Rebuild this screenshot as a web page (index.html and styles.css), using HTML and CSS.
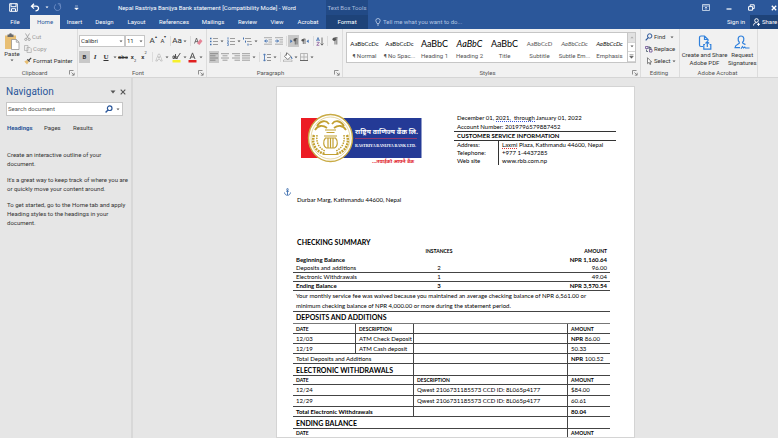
FILE: index.html
```html
<!DOCTYPE html>
<html lang="en">
<head>
<meta charset="utf-8">
<title>Nepal Rastriya Banijya Bank statement - Word</title>
<link rel="stylesheet" href="styles.css">
</head>
<body>
<svg class="defs" aria-hidden="true">
  <symbol id="caret" viewBox="0 0 4 3"><path d="M.5 .6h3L2 2.3z" fill="#555"/></symbol>
  <symbol id="launch" viewBox="0 0 6 6"><path d="M.5 4.5v-4h4M2.500 2.500l2.500 2.500M5.200 2.800v2.400h-2.400" fill="none" stroke="#777" stroke-width=".8"/></symbol>
</svg>

<header class="top">
  <div class="titlebar">
    <div class="quick">
      <button aria-label="Save"><svg width="9" height="9" viewBox="0 0 9 9"><path d="M.7.7h7.600v7.600H.7zM2 .7v3h5v-3M2.500 8.300v-2.600h4v2.600" fill="none" stroke="#fff"/></svg></button>
      <button aria-label="Undo"><svg width="10" height="9" viewBox="0 0 10 9"><path d="M4 .8 1.500 3.200 4 5.600M1.800 3.200h4.400c3.400 0 3 4.600-.7 4.600" fill="none" stroke="#fff" stroke-width="1.300"/></svg></button>
      <button aria-label="Undo list" class="light"><svg width="4" height="3"><path d="M.5.6h3L2 2.300z" fill="#fff"/></svg></button>
      <button aria-label="Repeat"><svg width="9" height="9" viewBox="0 0 9 9"><path d="M3 1.500a3.200 3.200 0 1 0 3.500.3M4.800.8h2.400v2.400" fill="none" stroke="#6c8cc4"/></svg></button>
      <button aria-label="Customize toolbar"><svg width="5" height="6"><path d="M1 1h3M.7 3h3.600L2.500 5z" fill="#fff" stroke="#fff" stroke-width=".5"/></svg></button>
    </div>
    <h1>Nepal Rastriya Banijya Bank statement [Compatibility Mode] - Word</h1>
    <span class="context">Text Box Tools</span>
    <div class="winctl">
      <button aria-label="Ribbon display options"><svg width="8" height="7" viewBox="0 0 8 7"><path d="M.5.5h7v6h-7zM.5 2h7M4 5.800V3M2.800 4.200 4 3l1.200 1.200" fill="none" stroke="#dbe4f3" stroke-width=".8"/></svg></button>
      <button aria-label="Minimize"><svg width="6" height="6"><path d="M.5 4h5" stroke="#fff" stroke-width="1.200"/></svg></button>
      <button aria-label="Restore"><svg width="7" height="7" viewBox="0 0 7 7"><path d="M.6 2.600h4v3.600h-4zM2.200 2.400V.8h4v3.800H4.800" fill="none" stroke="#fff" stroke-width="1"/></svg></button>
      <button aria-label="Close"><svg width="6" height="6"><path d="M.8.8l4.400 4.400M5.200.8.8 5.200" stroke="#fff" stroke-width="1.300"/></svg></button>
    </div>
  </div>
  <nav class="tabs">
    <a href="#">File</a><a href="#" class="on">Home</a><a href="#">Insert</a><a href="#">Design</a><a href="#">Layout</a><a href="#">References</a><a href="#">Mailings</a><a href="#">Review</a><a href="#">View</a><a href="#">Acrobat</a><a href="#" class="fmt">Format</a>
    <label class="tell"><svg width="6" height="8" viewBox="0 0 6 8"><path d="M2 5.500C2 4.500.8 4 .8 2.700a2.200 2.200 0 0 1 4.400 0C5.200 4 4 4.500 4 5.500zM2 7h2" fill="none" stroke="#c3d2ea" stroke-width=".8"/></svg><input type="text" placeholder="Tell me what you want to do..."></label>
    <a href="#" class="sign">Sign in</a>
    <a href="#" class="share"><svg width="7" height="8" viewBox="0 0 7 8"><circle cx="3.500" cy="2.500" r="1.800" fill="none" stroke="#fff"/><path d="M.6 7.500c0-2 1.200-2.800 2.900-2.800M4 6.300h3M5.500 4.800v3" fill="none" stroke="#fff"/></svg>Share</a>
  </nav>
</header>

<section class="ribbon">
  <div class="group clip">
    <div class="body">
      <button class="paste"><svg width="16" height="17" viewBox="0 0 16 17"><path d="M1 2.500h11V16H1z" fill="#e8bf74"/><path d="M3.500 1.500h1.700a1.300 1.300 0 0 1 2.600 0h1.700V4h-6z" fill="#6a6a6a"/><path d="M7.500 6.500h4.800l2.700 2.700v7.300H7.500z" fill="#fff" stroke="#8a8a8a" stroke-width=".7"/><path d="M12.300 6.500v2.700H15" fill="none" stroke="#8a8a8a" stroke-width=".7"/></svg>Paste<svg width="4" height="3"><use href="#caret"/></svg></button>
      <div class="cliplist">
        <button class="dim"><svg width="7" height="8" viewBox="0 0 7 8"><path d="M1.500.5l3 5M5.500.5l-3 5" stroke="#999" stroke-width=".8"/><circle cx="1.800" cy="6.400" r="1.100" fill="none" stroke="#999" stroke-width=".8"/><circle cx="5.200" cy="6.400" r="1.100" fill="none" stroke="#999" stroke-width=".8"/></svg>Cut</button>
        <button class="dim"><svg width="8" height="8" viewBox="0 0 8 8"><path d="M.5.5h3.500v5H.5zM3 2.500h3l1.300 1.300v3.700H3z" fill="#eee" stroke="#aaa" stroke-width=".7"/></svg>Copy</button>
        <button><svg width="8" height="8" viewBox="0 0 8 8"><path d="M.3 4.500 3 3l1.800 2L3 7.500z" fill="#e8bf74"/><path d="M3.300 2.300 5.600 4.700M4.600 3.500l2.600-2.600" stroke="#444" stroke-width="1.200"/></svg>Format Painter</button>
      </div>
    </div>
    <footer><span>Clipboard</span><svg width="6" height="6"><use href="#launch"/></svg></footer>
  </div>

  <div class="group font">
    <div class="body rows">
      <div class="row f1">
        <label class="combo"><select aria-label="Font"><option>Calibri</option></select><svg width="4" height="3"><use href="#caret"/></svg></label>
        <label class="combo"><select aria-label="Font size"><option>11</option></select><svg width="4" height="3"><use href="#caret"/></svg></label>
        <i></i>
        <button class="big">A<sup>▴</sup></button>
        <button>A<sup>▾</sup></button>
        <i class="bar"></i>
        <button class="big">Aa<svg width="6" height="3"><use href="#caret"/></svg></button>
        <i class="bar"></i>
        <button aria-label="Clear formatting"><svg width="9" height="9" viewBox="0 0 9 9"><path d="M.5 6.500 2.500 1l2 5.500M1.200 4.600h2.600" fill="none" stroke="#555" stroke-width=".8"/><path d="M3 6.200 6.200 2 8.500 4 5.400 8z" fill="#e58496"/></svg></button>
      </div>
      <div class="row f2">
        <button class="sel"><b>B</b></button><button><em>I</em></button><button><u>U</u></button><svg width="4" height="3"><use href="#caret"/></svg>
        <button><s>abc</s></button><button><b>x</b><sub>2</sub></button><button><b>x</b><sup>2</sup></button><i class="bar"></i>
        <button aria-label="Text effects"><svg width="8" height="9" viewBox="0 0 8 9"><path d="M.8 8 3.500 1h1L7.200 8H5.700L5 6.200H3L2.300 8zM3.400 5h1.200L4 3.200z" fill="#fff" stroke="#aaa" stroke-width=".6"/></svg></button><svg width="4" height="3"><use href="#caret"/></svg>
        <button aria-label="Highlight"><svg width="9" height="11" viewBox="0 0 9 11"><path d="M1 6.500V4h1.500v2.500zM3.500 2v4.500H5V4M8.300 1 5.500 5.300 4.800 7" fill="none" stroke="#555"/><path d="M.5 8h8v2.500h-8z" fill="#f6f02c"/></svg></button><svg width="4" height="3"><use href="#caret"/></svg>
        <button aria-label="Font color"><svg width="9" height="11" viewBox="0 0 9 11"><path d="M2 7 4.500.9 7 7M2.900 5h3.200" fill="none" stroke="#555"/><path d="M.5 8h8v2.500h-8z" fill="#e02020"/></svg></button><svg width="4" height="3"><use href="#caret"/></svg>
      </div>
    </div>
    <footer><span>Font</span><svg width="6" height="6"><use href="#launch"/></svg></footer>
  </div>

  <div class="group para">
    <div class="body rows">
      <div class="row p1">
        <button aria-label="Bullets"><svg width="8" height="9" viewBox="0 0 8 9"><path d="M0 1.500h1.500M0 4.500h1.500M0 7.500h1.500" stroke="#3f6fb0" stroke-width="1.500"/><path d="M3 1.500h5M3 4.500h5M3 7.500h5" stroke="#888" stroke-width=".8"/></svg></button><svg width="4" height="3"><use href="#caret"/></svg>
        <button aria-label="Numbering"><svg width="8" height="9" viewBox="0 0 8 9"><path d="M1 .3v2.300M.3 3.700h1v1.700h-1M.3 6.500h1v2h-1" fill="none" stroke="#3f6fb0" stroke-width=".8"/><path d="M3 1.500h5M3 4.500h5M3 7.500h5" stroke="#888" stroke-width=".8"/></svg></button><svg width="4" height="3"><use href="#caret"/></svg>
        <button aria-label="Multilevel list"><svg width="9" height="9" viewBox="0 0 9 9"><path d="M.5.5v2M2.500 3.600v2M5 6.600v2" stroke="#3f6fb0"/><path d="M2 1.500h6M4 4.500h4.500M6.500 7.500h2.500" stroke="#888" stroke-width=".8"/></svg></button><svg width="4" height="3"><use href="#caret"/></svg>
        <i></i>
        <button aria-label="Decrease indent"><svg width="8" height="8" viewBox="0 0 8 8"><path d="M0 .7h8M4.500 2.800H8M4.500 5H8M0 7.200h8" stroke="#999" stroke-width=".8"/><path d="M4 4H.8M2.200 2.500.7 4l1.500 1.500" fill="none" stroke="#3f6fb0"/></svg></button>
        <button aria-label="Increase indent"><svg width="8" height="8" viewBox="0 0 8 8"><path d="M0 .7h8M4.500 2.800H8M4.500 5H8M0 7.200h8" stroke="#999" stroke-width=".8"/><path d="M.2 4h3.200M2 2.500 3.500 4 2 5.500" fill="none" stroke="#3f6fb0"/></svg></button>
        <i class="bar"></i>
        <button class="sel" aria-label="Left to right"><svg width="8" height="7" viewBox="0 0 8 7"><path d="M.3 1.500 2.500 3.300.3 5z" fill="#3f6fb0"/><path d="M5.300 6.500v-6h2M7 .5v6" stroke="#555" stroke-width=".8" fill="none"/><circle cx="4.800" cy="2" r="1.400" fill="#555"/></svg></button>
        <button aria-label="Right to left"><svg width="8" height="7" viewBox="0 0 8 7"><path d="M7.700 1.500 5.500 3.300 7.700 5z" fill="#3f6fb0"/><path d="M2.300 6v-5h2M4 1v5" stroke="#555" stroke-width=".8" fill="none"/><circle cx="1.800" cy="2.300" r="1.300" fill="#555"/></svg></button>
        <i class="bar"></i>
        <button aria-label="Sort"><svg width="8" height="9" viewBox="0 0 8 9"><path d="M.5 4 2 .5 3.500 4M1 3h2" fill="none" stroke="#3f6fb0" stroke-width=".8"/><path d="M.7 5.300h2.600L.7 8.300h2.600" fill="none" stroke="#8a5a9a" stroke-width=".8"/><path d="M6 .5v7.500M4.600 6.500 6 8.200l1.400-1.700" fill="none" stroke="#555" stroke-width=".8"/></svg></button>
        <i class="bar"></i>
        <button aria-label="Show marks"><svg width="6" height="8" viewBox="0 0 6 8"><path d="M3 7.500V.7h2.500M4.800.7v6.800" fill="none" stroke="#555" stroke-width=".8"/><circle cx="2.300" cy="2.300" r="1.800" fill="#555"/></svg></button>
      </div>
      <div class="row p2">
        <button class="sel" aria-label="Align left"><svg width="8" height="8" viewBox="0 0 8 8"><path d="M0 .7h8M0 2.800h5.500M0 5h8M0 7.200h5.500" stroke="#777" stroke-width=".8"/></svg></button>
        <button aria-label="Center"><svg width="8" height="8" viewBox="0 0 8 8"><path d="M0 .7h8M1.500 2.800h5M0 5h8M1.500 7.200h5" stroke="#888" stroke-width=".8"/></svg></button>
        <button aria-label="Align right"><svg width="8" height="8" viewBox="0 0 8 8"><path d="M0 .7h8M2.500 2.800H8M0 5h8M2.500 7.200H8" stroke="#888" stroke-width=".8"/></svg></button>
        <button aria-label="Justify"><svg width="8" height="8" viewBox="0 0 8 8"><path d="M0 .7h8M0 2.800h8M0 5h8M0 7.200h8" stroke="#888" stroke-width=".8"/></svg></button><svg width="4" height="3"><use href="#caret"/></svg>
        <i class="bar"></i>
        <button aria-label="Line spacing"><svg width="8" height="9" viewBox="0 0 8 9"><path d="M1.500 1v7M.2 2.300 1.500.8l1.300 1.500M.2 6.700 1.500 8.200l1.300-1.500" fill="none" stroke="#3f6fb0" stroke-width=".8"/><path d="M4 1.500h4M4 4.500h4M4 7.500h4" stroke="#777" stroke-width=".8"/></svg></button><svg width="4" height="3"><use href="#caret"/></svg>
        <i class="bar"></i>
        <button aria-label="Shading"><svg width="10" height="10" viewBox="0 0 10 10"><path d="M4.200 1 8 4.500 4.800 7.500 1.500 4.500zM3.500.5v3" fill="#fff" stroke="#666" stroke-width=".8"/><path d="M8.200 4.500l.9 2.500" stroke="#3f6fb0"/><path d="M.5 8h8.500v1.700H.5z" fill="#fff" stroke="#888" stroke-width=".5"/></svg></button><svg width="4" height="3"><use href="#caret"/></svg>
        <button aria-label="Borders"><svg width="8" height="8" viewBox="0 0 8 8"><path d="M.5.5h7v7h-7zM4 .5v7M.5 4h7" fill="none" stroke="#aaa" stroke-width=".8"/><path d="M0 7.500h8" stroke="#666"/></svg></button><svg width="4" height="3"><use href="#caret"/></svg>
      </div>
    </div>
    <footer><span>Paragraph</span><svg width="6" height="6"><use href="#launch"/></svg></footer>
  </div>

  <div class="group styles">
    <div class="body gallery">
      <button><span>AaBbCcDc</span>¶ Normal</button>
      <button><span>AaBbCcDc</span>¶ No Spac...</button>
      <button><span class="h">AaBbC</span>Heading 1</button>
      <button><span class="h it">AaBbC</span>Heading 2</button>
      <button><span class="h">AaBbC</span>Title</button>
      <button><span class="lt">AaBbCcD</span>Subtitle</button>
      <button><span class="lt it">AaBbCcDc</span>Subtle Em...</button>
      <button><span class="it">AaBbCcDc</span>Emphasis</button>
      <div class="scroll">
        <button aria-label="Up" class="off"><svg width="4" height="3"><path d="M.5 2.300h3L2 .6z" fill="#aaa"/></svg></button>
        <button aria-label="Down"><svg width="4" height="3"><use href="#caret"/></svg></button>
        <button aria-label="More"><svg width="5" height="5"><path d="M.5.7h4M.7 2.200h3.600L2.500 4.300z" fill="#555" stroke="#555" stroke-width=".5"/></svg></button>
      </div>
    </div>
    <footer><span>Styles</span><svg width="6" height="6"><use href="#launch"/></svg></footer>
  </div>

  <div class="group edit">
    <div class="body">
      <button><svg width="8" height="8" viewBox="0 0 8 8"><circle cx="4.700" cy="3" r="2.200" fill="none" stroke="#2b579a"/><path d="M3.200 4.700.7 7.300" stroke="#2b579a" stroke-width="1.200"/></svg>Find <svg class="far" width="4" height="3"><use href="#caret"/></svg></button>
      <button><svg width="8" height="8" viewBox="0 0 8 8"><path d="M.5 1.500h2.500v2H.5zM4.500 4.500H7v2.500H4.500z" fill="none" stroke="#6a4c93" stroke-width=".8"/><path d="M4 1v3M4 2.500h2V4H4M1.500 4.500v2h1.500" fill="none" stroke="#456" stroke-width=".8"/></svg>Replace</button>
      <button><svg width="8" height="8" viewBox="0 0 8 8"><path d="M2.500.7v6l1.400-1.300 1 2.100.9-.4-1-2.100h1.900z" fill="#fff" stroke="#555" stroke-width=".7"/></svg>Select<svg width="4" height="3"><use href="#caret"/></svg></button>
    </div>
    <footer><span>Editing</span></footer>
  </div>

  <div class="group acro">
    <div class="body">
      <button><svg width="14" height="15" viewBox="0 0 14 15"><path d="M5 11.500H3a1.500 1.500 0 0 1-1.500-1.500V2.500A1.500 1.500 0 0 1 3 1h3.500L10 4.500V6M6.500 1v3.500H10" fill="none" stroke="#2f80dc" stroke-width="1.200"/><path d="M7 9.500H5.800v4.700h7V9.500h-1.200M9.300 12V7M7.500 8.500l1.800-1.800 1.800 1.800" fill="none" stroke="#2f80dc" stroke-width="1.200"/></svg>Create and Share<br>Adobe PDF</button>
      <button><svg width="16" height="15" viewBox="0 0 16 15"><path d="M5.500 7.500C3.500 5.500 3.500 1 7 1s3.500 4.500 1.500 6.500c0 1.200 2 1.500 3 2M5.500 7.500C5.500 9.500 1.200 9 1 12.700h5" fill="none" stroke="#2f80dc" stroke-width="1.200"/><path d="M7 13.800l1.500-2.300 1 1.500 1.300-1 .7 1h4" fill="none" stroke="#2f80dc" stroke-width="1.100"/></svg>Request<br>Signatures</button>
    </div>
    <footer><span>Adobe Acrobat</span></footer>
  </div>
  <div class="tail"></div>
</section>

<div class="work">
  <aside class="pane">
    <div class="head"><h2>Navigation</h2><button aria-label="Pane options"><svg width="6" height="4"><path d="M.5.5h5L3 3.500z" fill="#555"/></svg></button><button aria-label="Close pane"><svg width="6" height="6"><path d="M.7.7l4.600 4.600M5.300.7.7 5.300" stroke="#555" stroke-width="1.100"/></svg></button></div>
    <label class="search"><input type="text" placeholder="Search document" aria-label="Search document"><svg width="8" height="8" viewBox="0 0 8 8"><circle cx="4.700" cy="3.200" r="2.300" fill="none" stroke="#2b579a" stroke-width="1.200"/><path d="M3.200 4.800.6 7.400" stroke="#2b579a" stroke-width="1.400"/></svg><svg width="4" height="3"><use href="#caret"/></svg></label>
    <nav><a href="#" class="on">Headings</a><a href="#">Pages</a><a href="#">Results</a></nav>
    <p>Create an interactive outline of your<br>document.</p>
    <p>It's a great way to keep track of where you are<br>or quickly move your content around.</p>
    <p>To get started, go to the Home tab and apply<br>Heading styles to the headings in your<br>document.</p>
  </aside>

  <main>
    <article class="page">
      <div class="letterhead">
        <svg class="logo" width="122" height="52" viewBox="0 0 122 52" role="img" aria-label="Rastriya Banijya Bank Ltd.">
          <path d="M1 5h30v40H1z" fill="#ec1c24"/><path d="M30 5h91.500v40H30z" fill="#243a96"/>
          <ellipse cx="30.500" cy="25" rx="22" ry="23.500" fill="#fff" stroke="#c9ab45" stroke-width="1.400"/>
          <ellipse cx="30.500" cy="25" rx="19.500" ry="21" fill="none" stroke="#dcc77c" stroke-width=".7"/>
          <g fill="none" stroke="#c2a032">
            <path d="M17 13c4-6 9-6 12-2M44 13c-4-6-9-6-12-2M15 17c3-5 8-5 12-2M46 17c-3-5-8-5-12-2" stroke-width="1.800"/>
            <path d="M14 22c-3 9 2 17 11 19M47 22c3 9-2 17-11 19" stroke-width="2.500" stroke-dasharray="2 .8"/>
            <path d="M17 22c-1 8 2 13 8 16M44 22c1 8-2 13-8 16" stroke-width="1.500" stroke-dasharray="1.500 1"/>
            <path d="M25 17h11M26.500 19.500h8M24 23h13M25.500 25c-3 3-2 9 1 10h8c3-1 4-7 1-10zM28 25v10M30.500 25v10M33 25v10M23.500 41.500h14" stroke-width="1.200"/>
          </g>
          <path d="M55 25.500h62" stroke="#a83a68" stroke-width=".8"/>
          <text x="55" y="21" class="nep" fill="#fff">राष्ट्रिय वाणिज्य बैंक लि.</text>
          <text x="55" y="34" class="eng" fill="#fff">RASTRIYA BANIJYA BANK LTD.</text>
          <text x="72" y="50" class="tag" fill="#e0202a">...तपाईंको आफ्नै बैंक</text>
        </svg>
        <section class="account">
          <p>December 01, <span class="blue">2021,&nbsp; through</span> January 01, 2022<br>Account Number: 2019796579887452</p>
          <h3>CUSTOMER SERVICE INFORMATION</h3>
          <table>
            <tr><td>Address:</td><td><span class="red">Laxmi</span> Plaza, Kathmandu 44600, Nepal</td></tr>
            <tr><td>Telephone:</td><td>+977 1-4437285</td></tr>
            <tr><td>Web site</td><td>www.rbb.com.np</td></tr>
          </table>
        </section>
      </div>
      <svg class="anchor" width="7" height="8" viewBox="0 0 7 8" aria-hidden="true"><circle cx="3.500" cy="1.300" r=".8" fill="none" stroke="#3f6fb0" stroke-width=".8"/><path d="M3.500 2v5M2 3.200h3M.5 4.500C.8 6.500 2 7.300 3.500 7.300S6.200 6.500 6.500 4.500" fill="none" stroke="#3f6fb0" stroke-width=".9"/></svg>
      <p class="addr">Durbar Marg, Kathmandu 44600, Nepal</p>

      <h3 class="sumhead">CHECKING SUMMARY</h3>
      <table class="sum">
        <tr class="th"><th></th><th>INSTANCES</th><th>AMOUNT</th></tr>
        <tr class="b"><td>Beginning Balance</td><td></td><td>NPR 1,160.64</td></tr>
        <tr class="ln"><td>Deposits and additions</td><td>2</td><td>96.00</td></tr>
        <tr class="ln"><td>Electronic Withdrawals</td><td>1</td><td>49.04</td></tr>
        <tr class="ln b"><td>Ending Balance</td><td>3</td><td>NPR 3,570.54</td></tr>
      </table>
      <p class="note">Your monthly service fee was waived because you maintained an average checking balance of NPR 6,561.00 or<br>minimum checking balance of NPR 4,000.00 or more during the statement period.</p>
      <h3 class="dep">DEPOSITS AND ADDITIONS</h3>
      <table class="led">
        <colgroup><col class="c1"><col class="c2"><col><col class="c4"></colgroup>
        <tr class="th"><th>DATE</th><th class="v">DESCRIPTION</th><th class="v"></th><th class="v">AMOUNT</th></tr>
        <tr><td>12/03</td><td class="v">ATM Check Deposit</td><td class="v"></td><td class="v"><b>NPR</b> 86.00</td></tr>
        <tr><td>12/19</td><td class="v">ATM Cash deposit</td><td class="v"></td><td class="v">50.33</td></tr>
        <tr><td colspan="2">Total Deposits and Additions</td><td class="v"></td><td class="v"><b>NPR</b> 100.52</td></tr>
        <tr class="hd"><th colspan="2">ELECTRONIC WITHDRAWALS</th><td class="v"></td><td class="v"></td></tr>
        <tr class="th lo"><th colspan="2">DATE</th><th class="v">DESCRIPTION</th><th class="v">AMOUNT</th></tr>
        <tr class="tall"><td colspan="2">12/24</td><td class="v">Qwest 2106731185573 CCD ID: 8L065p4177</td><td class="v">$84.00</td></tr>
        <tr class="tall"><td colspan="2">12/29</td><td class="v">Qwest 2106731185573 CCD ID: 8L065p4177</td><td class="v">60.61</td></tr>
        <tr class="b"><td colspan="2">Total Electronic Withdrawals</td><td class="v"></td><td class="v">80.04</td></tr>
        <tr class="hd"><th colspan="3">ENDING BALANCE</th><td class="v"></td></tr>
        <tr class="th lo"><th colspan="3">DATE</th><th class="v">AMOUNT</th></tr>
      </table>
    </article>
  </main>
</div>
</body>
</html>
```
FILE: styles.css
```css
* { box-sizing: border-box; margin: 0; padding: 0; }
html, body { height: 100%; }
body {
  display: flex; flex-direction: column; overflow: hidden;
  background: #e6e6e6; color: #333;
  font: 6px/8px Roboto, "Open Sans", sans-serif;
}
button, input, select { font: inherit; color: inherit; border: 0; background: none; appearance: none; outline: 0; }
a { color: inherit; text-decoration: none; }
svg { display: block; flex: none; }
.defs { position: absolute; width: 0; height: 0; }
table { border-spacing: 0; width: 100%; }

/* title bar and tabs */
.top { background: #2b579a; color: #fff; flex: none; }
.titlebar { display: grid; grid-template-columns: 90px 236px 42px 1fr auto; height: 15px; align-items: center; }
.titlebar > .winctl { grid-column: 5; }
.titlebar h1 { font-size: 6px; font-weight: 400; text-align: right; padding-right: 30px; white-space: nowrap; }
.quick { display: grid; grid-template-columns: 26px 17px 8px 12px 1fr; align-items: center; justify-items: center; }
.context { background: #224a86; color: #a9bcdc; text-align: center; height: 15px; line-height: 15px; white-space: nowrap; }
.winctl { display: flex; gap: 16px; align-items: center; padding-right: 1px; }
.tabs { display: grid; grid-template-columns: 30px 30px 29px 31px 33px 42px 36px 33px 26px 36px 42px 1fr 28px 28px; height: 14px; line-height: 14px; text-align: center; white-space: nowrap; }
.tabs .on { background: #f1f1f1; color: #2b579a; }
.tabs .fmt { background: #1e4379; }
.tell { display: flex; align-items: center; gap: 2px; padding-left: 7px; color: #c3d2ea; }
.tell input { flex: 1; min-width: 0; }
.tell input::placeholder { color: #b4c6e3; }
.share { background: #1e4379; display: flex; align-items: center; gap: 2px; padding-left: 3px; }

/* ribbon */
.ribbon { display: flex; flex: none; height: 49px; background: #f1f1f1; border-bottom: 1px solid #d5d5d5; white-space: nowrap; }
.group { display: flex; flex-direction: column; border-right: 1px solid #dcdcdc; }
.group .body { flex: 1; }
.group footer { display: grid; grid-template-columns: 1fr auto; align-items: center; height: 8px; text-align: center; color: #555; padding-right: 2px; }
.clip { width: 78px; }
.font { width: 129px; }
.para { width: 136px; }
.styles { flex: 1; min-width: 0; }
.edit { width: 39px; }
.acro { width: 78px; }
.tail { width: 20px; }
.clip .body { display: flex; }
.paste { display: flex; flex-direction: column; align-items: center; width: 24px; padding-top: 4px; }
.paste svg:last-child { margin-top: 1px; }
.cliplist { display: flex; flex-direction: column; gap: 4px; padding-top: 4px; }
.cliplist button { display: flex; align-items: center; gap: 1px; height: 8px; }
.cliplist .dim { color: #999; }
.rows { display: flex; flex-direction: column; gap: 4px; padding: 6px 1px 0; }
.row { display: grid; height: 12px; align-items: center; justify-items: center; }
.row button { display: flex; align-items: center; justify-content: center; height: 12px; }
.row .big { font-size: 8px; }
.row sup, .row sub { font-size: 4px; line-height: 4px; }
.row sup { align-self: flex-start; }
.row sub { align-self: flex-end; }
.row .sel { background: #c8c8c8; width: 100%; }
.row em, .row u { font-family: "Liberation Serif", serif; font-size: 7px; font-weight: 700; }
.bar { width: 1px; height: 10px; background: #dcdcdc; }
.f1 { grid-template-columns: 46px 20px 3px 10px 11px 2px 18px 2px 1fr; }
.f2 { grid-template-columns: 11px 10px 12px 5px 12px 9px 12px 4px 10px 6px 12px 5px 11px 5px; }
.para .rows { padding-left: 2px; }
.p1 { grid-template-columns: 9px 8px 10px 6px 11px 5px 5px 10px 11px 4px 11px 12px 4px 10px 5px 10px; }
.p2 { grid-template-columns: 10px 12px 10px 10px 5px 6px 10px 5px 6px 10px 5px 11px 6px; }
.combo { display: flex; align-items: center; width: 100%; height: 12px; background: #fff; border: 1px solid #c6c6c6; padding-right: 1px; }
.combo select { flex: 1; min-width: 0; padding-left: 1px; }
.gallery { display: grid; grid-template-columns: repeat(8, 1fr) 8px; margin: 3px 4px 6px 3px; background: #fff; border: 1px solid #c6c6c6; }
.gallery > button { display: flex; flex-direction: column; align-items: center; justify-content: space-between; padding: 6px 0 2px; min-width: 0; overflow: hidden; color: #555; }
.gallery span { font-family: Lato, sans-serif; font-size: 6px; line-height: 10px; color: #111; }
.gallery .h { font-size: 9px; color: #000; }
.gallery .lt { color: #555; }
.gallery .it { font-style: italic; }
.scroll { display: grid; grid-template-rows: repeat(3, 1fr); border-left: 1px solid #c6c6c6; }
.scroll button { display: grid; place-items: center; border-bottom: 1px solid #d6d6d6; }
.scroll .off { background: #e1e1e1; }
.edit .body { display: flex; flex-direction: column; gap: 4px; padding: 4px 0 0 4px; }
.edit .body button { display: flex; align-items: center; gap: 1px; height: 8px; }
.edit .far { margin-left: 4px; }
.acro .body { display: grid; grid-template-columns: 47px 1fr; padding: 4px 1px 0; }
.acro button { text-align: center; }
.acro button svg { margin: 0 auto 1px; }

/* navigation pane */
.work { display: flex; flex: 1; min-height: 0; }
.pane { width: 133px; flex: none; border-right: 2px solid #d8d8d8; padding: 7px 0 0 6px; }
.head { display: flex; align-items: center; gap: 4px; padding-right: 5px; }
.head h2 { flex: 1; font-size: 10px; line-height: 14px; font-weight: 400; color: #2b579a; }
.search { display: flex; align-items: center; gap: 3px; height: 14px; margin: 3px 8px 8px 0; padding: 0 2px 0 1px; background: #fff; border: 1px solid #c6c6c6; }
.search input { flex: 1; min-width: 0; }
.search input::placeholder { color: #555; }
.pane nav { display: grid; grid-template-columns: 37px 29px 1fr; margin-bottom: 18px; padding-left: 1px; }
.pane nav .on { color: #2b579a; font-weight: 700; }
.pane p { line-height: 9px; margin-bottom: 7px; white-space: nowrap; padding-left: 1px; }

/* document */
main { flex: 1; display: flex; justify-content: center; padding-top: 8px; overflow: hidden; }
.page { width: 359px; height: 100%; overflow: hidden; background: #fff; border: 1px solid #d4d4d4; padding: 26px 18px 0 16px; color: #000; font: 6px/8px Lato, sans-serif; white-space: nowrap; }
.letterhead { display: flex; justify-content: space-between; align-items: flex-start; height: 52px; }
.logo { margin-left: 7px; }
.nep { font: 700 7px "Noto Sans Devanagari", "Noto Sans", sans-serif; }
.eng { font: 700 4px "Liberation Serif", serif; }
.tag { font: 700 5px "Noto Sans Devanagari", "Noto Sans", sans-serif; }
.account { width: 162px; }
.account > p { padding-left: 3px; line-height: 9px; }
.account h3 { font-size: 6px; line-height: 8px; border: 1px solid #333; border-width: 1px 0; padding-left: 3px; }
.account td { padding: 0 3px; height: 8px; }
.account td:first-child { width: 45px; border-right: 1px solid #333; }
.blue { border-bottom: 1px dotted #3b5bdb; }
.red { border-bottom: 1px dotted #e03131; }
.anchor { margin: 23px 0 0 -9px; }
.addr { padding-left: 4px; }
h3 { font-size: 7px; line-height: 11px; }
.page .sumhead { margin-top: 34px; padding-left: 4px; line-height: 8px; }
.sum, .led, .note, .dep { width: 317px; }
.sum { table-layout: fixed; }
.sum td, .sum th { height: 9px; line-height: 8px; padding: 0 3px; text-align: center; }
.sum th:first-child { width: 118px; }
.sum th:nth-child(2) { width: 56px; }
.sum td:first-child { text-align: left; }
.sum td:last-child, .sum th:last-child { text-align: right; }
.th th { font-size: 5px; }
.b { font-weight: 700; }
.ln td { border-bottom: 1px solid #444; }
.note { padding: 0 3px; line-height: 10px; border-bottom: 1px solid #444; }
.dep { padding: 0 3px; }
.led { table-layout: fixed; border-top: 1px solid #777; }
.c1 { width: 62px; }
.c2 { width: 58px; }
.c4 { width: 43px; }
.led td, .led th { height: 10px; line-height: 8px; padding: 0 3px; text-align: left; border-bottom: 1px solid #444; }
.led .v { border-left: 1px solid #444; }
.led .tall td { height: 11px; }
.led .hd th { font-size: 7px; }
.led .hd th, .led .hd td { height: 12px; }
.led .lo th { height: 9px; }
```
